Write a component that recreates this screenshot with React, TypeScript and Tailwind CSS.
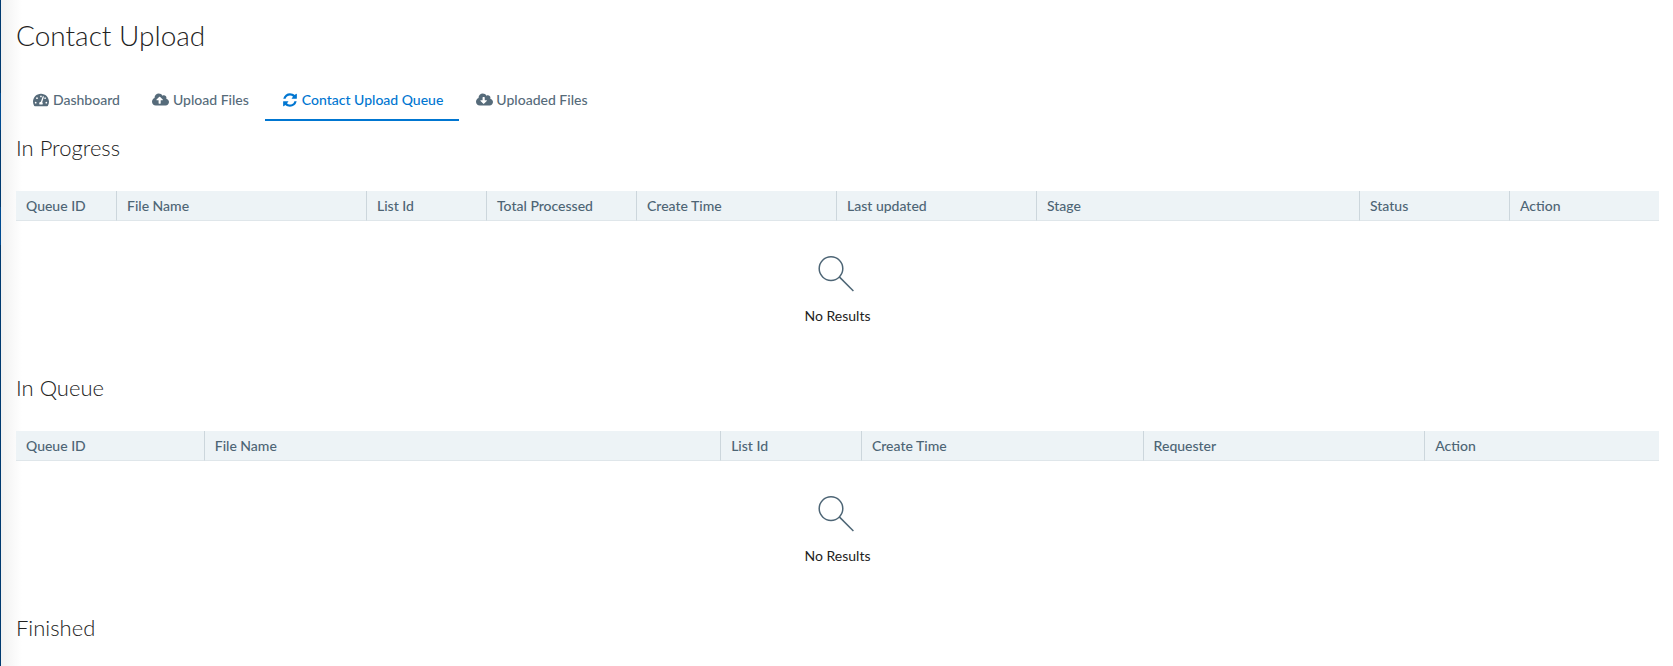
import type { ReactNode } from "react";
import { FaCloudDownloadAlt, FaCloudUploadAlt, FaTachometerAlt } from "react-icons/fa";

interface Column {
  label: string;
  width?: string;
}

interface QueueTableProps {
  title: string;
  columns: Column[];
}

const progressColumns: Column[] = [
  { label: "Queue ID", width: "w-[100px]" },
  { label: "File Name", width: "w-[250px]" },
  { label: "List Id", width: "w-[120px]" },
  { label: "Total Processed", width: "w-[150px]" },
  { label: "Create Time", width: "w-[200px]" },
  { label: "Last updated", width: "w-[200px]" },
  { label: "Stage" },
  { label: "Status", width: "w-[150px]" },
  { label: "Action", width: "w-[150px]" },
];

const queueColumns: Column[] = [
  { label: "Queue ID", width: "w-[calc(100%*20/175)]" },
  { label: "File Name", width: "w-[calc(100%*55/175)]" },
  { label: "List Id", width: "w-[calc(100%*15/175)]" },
  { label: "Create Time", width: "w-[calc(100%*30/175)]" },
  { label: "Requester", width: "w-[calc(100%*30/175)]" },
  { label: "Action", width: "w-[calc(100%*25/175)]" },
];

const RefreshIcon = () => (
  <svg className="size-4" viewBox="0 0 1792 1792" fill="currentColor" aria-hidden="true">
    <path d="M1639 1056q0 5-1 7-64 268-268 434.5t-478 166.5q-146 0-282.5-55t-243.5-157l-129 129q-19 19-45 19t-45-19-19-45v-448q0-26 19-45t45-19h448q26 0 45 19t19 45-19 45l-137 137q71 66 161 102t187 36q134 0 250-65t186-179q11-17 53-117 8-23 30-23h192q13 0 22.5 9.5t9.5 22.5zm25-800v448q0 26-19 45t-45 19h-448q-26 0-45-19t-19-45 19-45l138-138q-148-137-349-137-134 0-250 65t-186 179q-11 17-53 117-8 23-30 23h-199q-13 0-22.5-9.5t-9.5-22.5v-7q65-268 270-434.5t480-166.5q146 0 284 55.5t245 156.5l130-129q19-19 45-19t45 19 19 45z" />
  </svg>
);

const tabs: { label: string; icon: ReactNode; active?: boolean }[] = [
  { label: "Dashboard", icon: <FaTachometerAlt className="size-4" /> },
  { label: "Upload Files", icon: <FaCloudUploadAlt className="size-[17px]" /> },
  { label: "Contact Upload Queue", icon: <RefreshIcon />, active: true },
  { label: "Uploaded Files", icon: <FaCloudDownloadAlt className="size-[17px]" /> },
];

const SearchIcon = () => (
  <svg
    className="size-10 text-[#4d6575]"
    viewBox="0 0 40 40"
    fill="none"
    stroke="currentColor"
    strokeWidth="1.5"
    aria-hidden="true"
  >
    <circle cx="13" cy="13.6" r="11.8" />
    <path d="M21.3 21.9 35.4 36" />
  </svg>
);

const SectionTitle = ({ children }: { children: ReactNode }) => (
  <h2 className="text-[22px] leading-[26px] font-light">{children}</h2>
);

const QueueTable = ({ title, columns }: QueueTableProps) => (
  <section className="mb-[50px]">
    <SectionTitle>{title}</SectionTitle>
    <table
      aria-label={title}
      className="mt-[30px] w-full table-fixed border-separate border-spacing-0 text-sm"
    >
      <colgroup>
        {columns.map(({ label, width }) => (
          <col key={label} className={width} />
        ))}
      </colgroup>
      <thead>
        <tr className="bg-[#edf3f6] text-left text-[#4d6575]">
          {columns.map(({ label }) => (
            <th
              key={label}
              scope="col"
              className="border-b border-l border-b-[#dfe6ea] border-l-[#ccd6dc] py-1 pr-2 pl-[10px] leading-[21px] font-medium first:border-l-0"
            >
              {label}
            </th>
          ))}
        </tr>
      </thead>
      <tbody>
        <tr>
          <td colSpan={columns.length} className="pt-[34px]">
            <div className="flex flex-col items-center gap-3">
              <SearchIcon />
              <p className="leading-[18px]">No Results</p>
            </div>
          </td>
        </tr>
      </tbody>
    </table>
  </section>
);

const App = () => {
  return (
    <div className="flex min-h-screen bg-white font-['Lato',sans-serif] text-[#222222]">
      <div className="w-px shrink-0 bg-[#003a70]">
        <div className="mt-[93px] h-[37px] bg-[#004b91]" />
        <div className="mt-[77px] h-[38px] bg-[#004b91]" />
      </div>
      <div className="w-[21px] shrink-0 bg-linear-to-r from-[#f1f1f1] to-white" />
      <main className="-ml-[6px] min-w-0 grow pt-4 pr-[14px]">
        <h1 className="text-[28px] leading-[38px] font-light">Contact Upload</h1>

        <nav className="mt-[26px] mb-[14px] flex">
          {tabs.map(({ label, icon, active }) => (
            <a
              key={label}
              href="#"
              aria-current={active ? "page" : undefined}
              className={`flex h-[41px] items-center gap-[3px] border-b-2 px-4 text-sm font-medium ${
                active
                  ? "border-[#0076d1] text-[#0076d1]"
                  : "border-transparent text-[#566b7a]"
              }`}
            >
              <span className="flex w-[18px] justify-center">{icon}</span>
              {label}
            </a>
          ))}
        </nav>

        <QueueTable title="In Progress" columns={progressColumns} />
        <QueueTable title="In Queue" columns={queueColumns} />
        <SectionTitle>Finished</SectionTitle>
      </main>
    </div>
  );
};

export default App;
